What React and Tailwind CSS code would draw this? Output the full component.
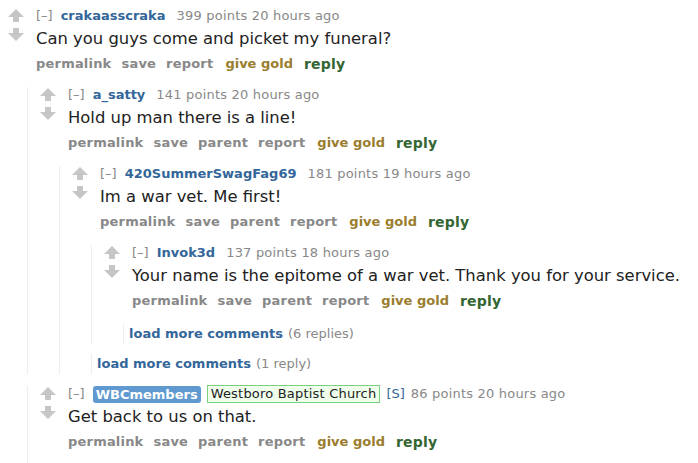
import React from "react";

const UpArrow = () => (
  <svg width="16" height="13" viewBox="0 0 16 13">
    <polygon points="8,0 16,8 11,8 11,13 5,13 5,8 0,8" fill="#c6c6c6" />
  </svg>
);

const DownArrow = () => (
  <svg width="16" height="13" viewBox="0 0 16 13">
    <polygon points="5,0 11,0 11,5 16,5 8,13 0,5 5,5" fill="#c6c6c6" />
  </svg>
);

function Tagline({ author, points, time, flair }) {
  return (
    <div className="flex items-center h-[16px] text-[13px] leading-[16px] text-[#888] whitespace-nowrap">
      <span className="mr-[8px]">[–]</span>
      {flair ? (
        <>
          <span className="bg-[#5f99cf] text-white font-bold rounded-[3px] px-[3px] mr-[6px] leading-[17px]">
            {author}
          </span>
          <span className="border border-[#7ccf7c] bg-[#efffec] text-[#222] px-[3px] mr-[6px] leading-[16px] tracking-[0.2px]">
            {flair}
          </span>
          <span className="text-[#369] mr-[6px]">[S]</span>
        </>
      ) : (
        <span className="text-[#369] font-bold mr-[11px]">{author}</span>
      )}
      <span className="tracking-[0.2px]">
        {points} points {time}
      </span>
    </div>
  );
}

function Buttons({ parent }) {
  return (
    <div className="flex items-center gap-[10px] mt-[7px] h-[16px] text-[13px] leading-[16px] font-bold text-[#888] whitespace-nowrap tracking-[0.2px]">
      <span>permalink</span>
      <span>save</span>
      {parent && <span>parent</span>}
      <span>report</span>
      <span className="text-[#9a7d2e] ml-[2px] tracking-[0px]">give gold</span>
      <span className="text-[#336633] text-[14px] ml-[1px]">reply</span>
    </div>
  );
}

function LoadMore({ count, className = "" }) {
  return (
    <div className={`border-l border-[#eee] pl-[5px] h-[20px] flex items-center text-[13px] whitespace-nowrap ${className}`}>
      <span className="text-[#369] font-bold mr-[5px]">load more comments</span>
      <span className="text-[#888]">({count})</span>
    </div>
  );
}

function Comment({ c, root, className = "" }) {
  return (
    <div className={`${root ? "pl-[8px]" : "border-l border-[#eee] pl-[12px]"} ${className}`}>
      <div className="flex pb-[15px]">
        <div className="flex flex-col gap-[6px] mt-[1px] w-[16px] mr-[12px] shrink-0">
          <UpArrow />
          <DownArrow />
        </div>
        <div className="flex flex-col">
          <Tagline author={c.author} points={c.points} time={c.time} flair={c.flair} />
          <div className="mt-[5px] h-[20px] text-[16.4px] leading-[20px] text-[#222] whitespace-nowrap">
            {c.body}
          </div>
          <Buttons parent={!root} />
        </div>
      </div>
      {c.children && <div className="ml-[19px]">{c.children}</div>}
    </div>
  );
}

export default function App() {
  return (
    <div className="w-[698px] h-[463px] bg-white overflow-hidden pt-[8px] font-['DejaVu_Sans',Verdana,sans-serif]">
      <Comment
        root
        c={{
          author: "crakaasscraka",
          points: 399,
          time: "20 hours ago",
          body: "Can you guys come and picket my funeral?",
          children: (
            <>
              <Comment
                c={{
                  author: "a_satty",
                  points: 141,
                  time: "20 hours ago",
                  body: "Hold up man there is a line!",
                  children: (
                    <Comment
                      c={{
                        author: "420SummerSwagFag69",
                        points: 181,
                        time: "19 hours ago",
                        body: "Im a war vet. Me first!",
                        children: (
                          <>
                            <Comment
                              c={{
                                author: "Invok3d",
                                points: 137,
                                time: "18 hours ago",
                                body: "Your name is the epitome of a war vet. Thank you for your service.",
                                children: <LoadMore count="6 replies" />,
                              }}
                            />
                            <LoadMore count="1 reply" className="mt-[10px]" />
                          </>
                        ),
                      }}
                    />
                  ),
                }}
              />
              <Comment
                className="mt-[12px]"
                c={{
                  author: "WBCmembers",
                  flair: "Westboro Baptist Church",
                  points: 86,
                  time: "20 hours ago",
                  body: "Get back to us on that.",
                }}
              />
            </>
          ),
        }}
      />
    </div>
  );
}
